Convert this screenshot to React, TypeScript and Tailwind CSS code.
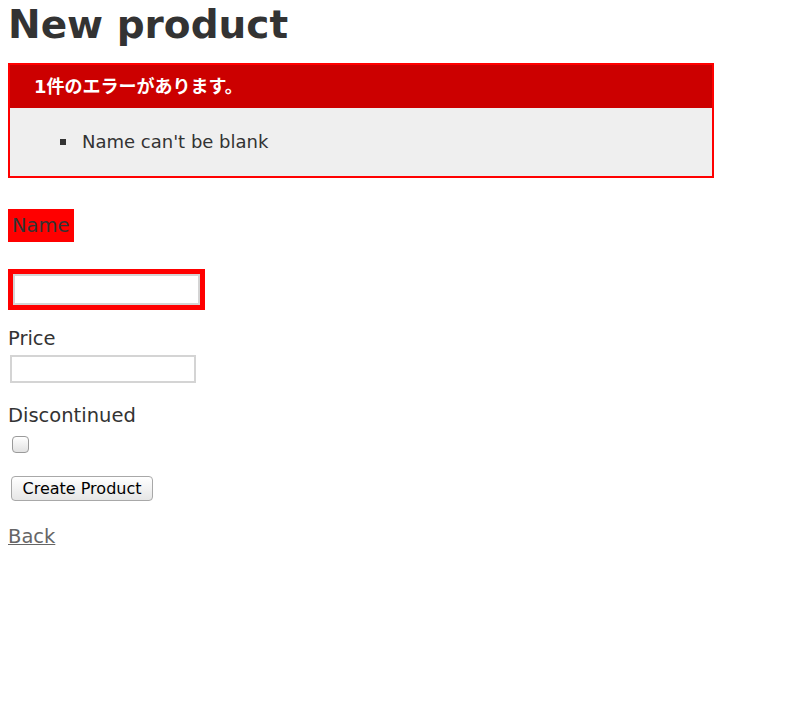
export default function App() {
  return (
    <div className="min-h-[708px] bg-white px-2 text-[19.5px] leading-[27px] text-[#333] [font-family:'DejaVu_Sans',Verdana,sans-serif]">
      <h1 className="pt-[3px] text-[39px] font-bold leading-[44px]">New product</h1>

      <div className="mt-[16px] w-[706px] border-[2.5px] border-[#ff0000] bg-[#efefef]">
        <h2 className="flex h-[43px] items-center bg-[#cc0000] pl-[24px] text-[18px] font-bold text-white [font-family:'DejaVu_Sans','Noto_Sans_CJK_JP',sans-serif]">
          1件のエラーがあります。
        </h2>
        <ul className="pb-[21px] pl-[50px] pt-[20px] text-[18px]">
          <li className="flex items-center gap-[16px]">
            <span className="h-[6px] w-[6px] bg-[#333]" />
            <span>Name can't be blank</span>
          </li>
        </ul>
      </div>

      <form className="mt-[31px]">
        <div>
          <div className="inline-block bg-[#ff0000] px-[4px] py-[3px]">Name</div>
        </div>
        <div className="mt-[27px] inline-block bg-[#ff0000] p-[5px]">
          <input type="text" className="block h-[31px] w-[187px] border-2 border-[#d4d4d4] bg-white" />
        </div>

        <div className="mt-[15px]">Price</div>
        <input type="text" className="ml-[2px] mt-[3px] block h-[28px] w-[186px] border-2 border-[#d4d4d4] bg-white" />

        <div className="mt-[19px]">Discontinued</div>
        <input type="checkbox" className="ml-[4px] mt-[7px] block h-[17px] w-[17px] appearance-none rounded-[4px] border border-[#9a9a9a] bg-gradient-to-b from-white to-[#e2e2e2]" />

        <button type="button" className="ml-[3px] mt-[23px] block h-[25px] w-[142px] rounded-[4px] border border-[#a8a8a8] bg-gradient-to-b from-white to-[#e6e6e6] text-[16px] leading-[22px] text-black">
          Create Product
        </button>

        <a href="#" className="mt-[22px] inline-block text-[#666] underline">Back</a>
      </form>
    </div>
  );
}
